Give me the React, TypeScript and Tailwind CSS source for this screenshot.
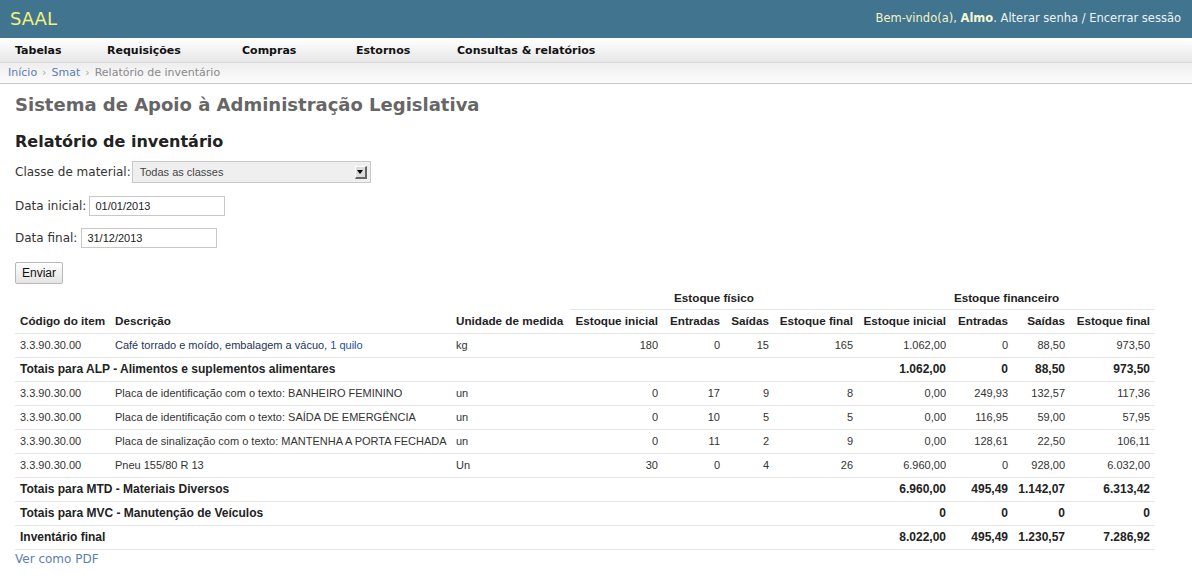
type Item = {
  code: string;
  desc: React.ReactNode;
  unit: string;
  nums: string[];
};

type Row =
  | { kind: "item"; item: Item }
  | { kind: "total"; label: string; values: string[] };

const rows: Row[] = [
  {
    kind: "item",
    item: {
      code: "3.3.90.30.00",
      desc: (
        <span className="text-[#1e3355]">
          Café torrado e moído, embalagem a vácuo, <span className="text-[#1f4f9c]">1 quilo</span>
        </span>
      ),
      unit: "kg",
      nums: ["180", "0", "15", "165", "1.062,00", "0", "88,50", "973,50"],
    },
  },
  { kind: "total", label: "Totais para ALP - Alimentos e suplementos alimentares", values: ["1.062,00", "0", "88,50", "973,50"] },
  {
    kind: "item",
    item: {
      code: "3.3.90.30.00",
      desc: "Placa de identificação com o texto: BANHEIRO FEMININO",
      unit: "un",
      nums: ["0", "17", "9", "8", "0,00", "249,93", "132,57", "117,36"],
    },
  },
  {
    kind: "item",
    item: {
      code: "3.3.90.30.00",
      desc: "Placa de identificação com o texto: SAÍDA DE EMERGÊNCIA",
      unit: "un",
      nums: ["0", "10", "5", "5", "0,00", "116,95", "59,00", "57,95"],
    },
  },
  {
    kind: "item",
    item: {
      code: "3.3.90.30.00",
      desc: "Placa de sinalização com o texto: MANTENHA A PORTA FECHADA",
      unit: "un",
      nums: ["0", "11", "2", "9", "0,00", "128,61", "22,50", "106,11"],
    },
  },
  {
    kind: "item",
    item: {
      code: "3.3.90.30.00",
      desc: "Pneu 155/80 R 13",
      unit: "Un",
      nums: ["30", "0", "4", "26", "6.960,00", "0", "928,00", "6.032,00"],
    },
  },
  { kind: "total", label: "Totais para MTD - Materiais Diversos", values: ["6.960,00", "495,49", "1.142,07", "6.313,42"] },
  { kind: "total", label: "Totais para MVC - Manutenção de Veículos", values: ["0", "0", "0", "0"] },
  { kind: "total", label: "Inventário final", values: ["8.022,00", "495,49", "1.230,57", "7.286,92"] },
];

const menu = [
  { name: "Tabelas", w: "w-[92px]" },
  { name: "Requisições", w: "w-[135px]" },
  { name: "Compras", w: "w-[114px]" },
  { name: "Estornos", w: "w-[101px]" },
  { name: "Consultas & relatórios", w: "" },
];

const numHeads = ["Estoque inicial", "Entradas", "Saídas", "Estoque final", "Estoque inicial", "Entradas", "Saídas", "Estoque final"];

export default function App() {
  return (
    <div className="min-h-[581px] bg-white font-['DejaVu_Sans',sans-serif] text-[#333]">
      <header className="h-[38px] bg-[#41758f] flex items-center justify-between pl-[10px] pr-[11px]">
        <span className="text-[18px] text-[#f2f27c] leading-none">SAAL</span>
        <span className="text-[11.5px] text-[#eef2f4]">
          <span className="text-[#f4f4c6]">Bem-vindo(a), </span>
          <b className="text-[#f6f6d2]">Almo</b>. Alterar senha / Encerrar sessão
        </span>
      </header>

      <nav className="h-[25px] flex items-center pl-[15px] pt-[2px] bg-gradient-to-b from-white to-[#e7e7e7] border-b border-[#dadada]">
        {menu.map((m) => (
          <span key={m.name} className={`${m.w} text-[11px] font-bold text-[#111]`}>
            {m.name}
          </span>
        ))}
      </nav>

      <div className="h-[21px] flex items-center pl-[8px] pt-[1px] text-[11px] bg-gradient-to-b from-[#eeeeee] to-[#fcfcfc] border-b border-[#c9c9c9]">
        <a className="text-[#5b80b2]">Início</a>
        <span className="text-[#aaa] px-[5px]">›</span>
        <a className="text-[#5b80b2]">Smat</a>
        <span className="text-[#aaa] px-[5px]">›</span>
        <span className="text-[#8a8a8a]">Relatório de inventário</span>
      </div>

      <main className="px-[15px]">
        <h1 className="mt-[10px] text-[18px] leading-[22px] font-bold text-[#666]">
          Sistema de Apoio à Administração Legislativa
        </h1>
        <h2 className="mt-[16px] text-[16px] leading-[20px] font-bold text-[#222]">Relatório de inventário</h2>

        <div className="mt-[9px] flex items-center text-[12px]">
          <span>Classe de material:</span>
          <div className="ml-[1px] w-[239px] h-[22px] bg-[#efefef] border border-[#c8c8c8] flex items-center justify-between pl-[7px] pr-[3px] font-['Liberation_Sans',sans-serif] text-[11px] text-[#444]">
            <span>Todas as classes</span>
            <span className="w-[12px] h-[13px] bg-[#dcdcdc] border-t border-l border-white border-r-2 border-b-2 border-r-[#666] border-b-[#666] flex items-center justify-center">
              <span className="w-0 h-0 border-l-[3px] border-r-[3px] border-t-[4px] border-l-transparent border-r-transparent border-t-black" />
            </span>
          </div>
        </div>

        <div className="mt-[13px] flex items-center text-[12px]">
          <span>Data inicial:</span>
          <div className="ml-[3px] w-[136px] h-[20px] border border-[#c8c8c8] flex items-center pl-[5px] font-['Liberation_Sans',sans-serif] text-[11px] text-[#222]">
            01/01/2013
          </div>
        </div>

        <div className="mt-[12px] flex items-center text-[12px]">
          <span>Data final:</span>
          <div className="ml-[4px] w-[136px] h-[20px] border border-[#c8c8c8] flex items-center pl-[5px] font-['Liberation_Sans',sans-serif] text-[11px] text-[#222]">
            31/12/2013
          </div>
        </div>

        <button className="mt-[14px] w-[48px] h-[22px] rounded-[2px] border border-[#b8b8b8] bg-gradient-to-b from-white to-[#e4e4e4] font-['Liberation_Sans',sans-serif] text-[12px] text-[#111]">
          Enviar
        </button>

        <table className="mt-[3px] w-[1140px] table-fixed border-collapse font-['Liberation_Sans',sans-serif] text-[11px]">
          <colgroup>
            <col className="w-[95px]" />
            <col className="w-[341px]" />
            <col className="w-[119px]" />
            <col className="w-[93px]" />
            <col className="w-[62px]" />
            <col className="w-[49px]" />
            <col className="w-[84px]" />
            <col className="w-[93px]" />
            <col className="w-[62px]" />
            <col className="w-[57px]" />
            <col className="w-[85px]" />
          </colgroup>
          <thead className="text-[11.7px] whitespace-nowrap">
            <tr className="h-[22px] text-[#222]">
              <th colSpan={3} />
              <th colSpan={4} className="font-bold text-center border-b border-[#e6e6e6]">
                Estoque físico
              </th>
              <th colSpan={4} className="font-bold text-center border-b border-[#e6e6e6]">
                Estoque financeiro
              </th>
            </tr>
            <tr className="h-[24px] text-[#222] border-b border-[#e6e6e6]">
              <th className="text-left font-bold px-[5px]">Código do item</th>
              <th className="text-left font-bold px-[5px]">Descrição</th>
              <th className="text-left font-bold px-[5px]">Unidade de medida</th>
              {numHeads.map((h, i) => (
                <th key={i} className="text-right font-bold px-[5px]">
                  {h}
                </th>
              ))}
            </tr>
          </thead>
          <tbody>
            {rows.map((r, i) =>
              r.kind === "item" ? (
                <tr key={i} className="h-[24px] border-b border-[#e6e6e6]">
                  <td className="px-[5px]">{r.item.code}</td>
                  <td className="px-[5px] whitespace-nowrap">{r.item.desc}</td>
                  <td className="px-[5px]">{r.item.unit}</td>
                  {r.item.nums.map((n, j) => (
                    <td key={j} className="px-[5px] text-right">
                      {n}
                    </td>
                  ))}
                </tr>
              ) : (
                <tr key={i} className="h-[24px] border-b border-[#e6e6e6] font-bold text-[#222] text-[12px]">
                  <td colSpan={7} className="px-[5px] whitespace-nowrap">
                    {r.label}
                  </td>
                  {r.values.map((v, j) => (
                    <td key={j} className="px-[5px] text-right">
                      {v}
                    </td>
                  ))}
                </tr>
              )
            )}
          </tbody>
        </table>

        <a className="block mt-[1px] text-[12px] leading-[16px] text-[#5b80b2]">Ver como PDF</a>
      </main>
    </div>
  );
}
